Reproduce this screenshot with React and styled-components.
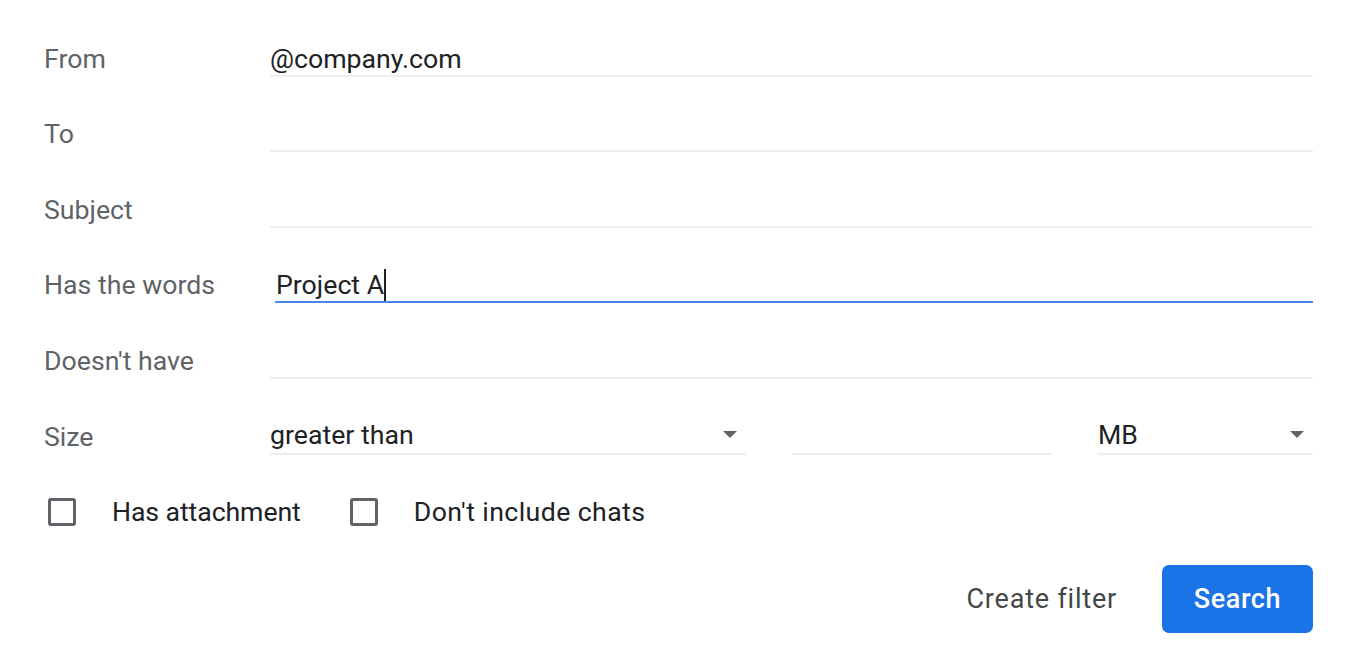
import React from "react";
import styled, { createGlobalStyle } from "styled-components";

const Global = createGlobalStyle`
  html, body { margin: 0; padding: 0; background: #ffffff; }
  body { font-family: Roboto, "Noto Sans", Arial, sans-serif; -webkit-font-smoothing: antialiased; }
`;

const Form = styled.div`
  width: 1348px;
  box-sizing: border-box;
  padding: 1px 35px 0 44px;
  display: flex;
  flex-direction: column;
`;

const Row = styled.div`
  display: grid;
  grid-template-columns: 226px 1fr;
  align-items: end;
  height: 75.6px;
`;

const Label = styled.div`
  font-size: 26.7px;
  line-height: 36px;
  color: #5f6368;
  white-space: nowrap;
`;

const Field = styled.div`
  position: relative;
  height: 36px;
  font-size: 26.7px;
  line-height: 40px;
  color: #202124;
  border-bottom: 2px solid ${(p) => (p.$focused ? "#4a86e8" : "#eceef1")};
  margin-left: ${(p) => (p.$focused ? "5px" : "0")};
  padding-left: ${(p) => (p.$focused ? "1px" : "0")};
  white-space: nowrap;
`;

const Caret = styled.span`
  display: inline-block;
  width: 2px;
  height: 32px;
  background: #202124;
  vertical-align: -7px;
`;

const SizeGroup = styled.div`
  display: grid;
  grid-template-columns: 476px 260px 1fr;
  column-gap: 46px;
  align-items: end;
`;

const Select = styled(Field)`
  display: flex;
  align-items: center;
  justify-content: space-between;
  padding-right: 9px;
`;

const Arrow = styled.span`
  width: 0;
  height: 0;
  border-left: 7.5px solid transparent;
  border-right: 7.5px solid transparent;
  border-top: 7.5px solid #5f6368;
`;

const CheckRow = styled.div`
  display: flex;
  align-items: center;
  margin-top: 43px;
  height: 28px;
  padding-left: 4px;
`;

const CheckItem = styled.label`
  display: flex;
  align-items: center;
  gap: 36px;
  margin-right: 49px;
  font-size: 26.7px;
  line-height: 32px;
  letter-spacing: ${(p) => p.$spacing || "0"};
  color: #202124;
  padding-top: 1px;
`;

const Box = styled.span`
  width: 28px;
  height: 28px;
  box-sizing: border-box;
  border: 3px solid #5f6368;
  border-radius: 3px;
  flex: none;
  margin-top: -1px;
`;

const Actions = styled.div`
  display: flex;
  justify-content: flex-end;
  align-items: center;
  gap: 21px;
  margin-top: 39px;
`;

const TextButton = styled.button`
  font-family: Roboto, "Noto Sans", Arial, sans-serif;
  font-size: 27px;
  font-weight: 400;
  letter-spacing: 0.8px;
  color: #444746;
  background: transparent;
  border: none;
  padding: 0 24px;
  height: 68px;
  cursor: pointer;
`;

const PrimaryButton = styled.button`
  font-family: Roboto, "Noto Sans", Arial, sans-serif;
  font-size: 27px;
  font-weight: 500;
  letter-spacing: 0.6px;
  color: #ffffff;
  background: #1b73e8;
  border: none;
  border-radius: 7px;
  width: 151px;
  height: 68px;
  cursor: pointer;
`;

const textRows = [
  { label: "From", value: "@company.com" },
  { label: "To", value: "" },
  { label: "Subject", value: "" },
  { label: "Has the words", value: "Project A", focused: true },
  { label: "Doesn't have", value: "" },
];

export default function App() {
  return (
    <>
      <Global />
      <Form>
        {textRows.map((r) => (
          <Row key={r.label}>
            <Label>{r.label}</Label>
            <Field $focused={r.focused}>
              {r.value}
              {r.focused && <Caret />}
            </Field>
          </Row>
        ))}
        <Row>
          <Label>Size</Label>
          <SizeGroup>
            <Select>
              <span>greater than</span>
              <Arrow />
            </Select>
            <Field />
            <Select>
              <span>MB</span>
              <Arrow />
            </Select>
          </SizeGroup>
        </Row>
        <CheckRow>
          <CheckItem $spacing="-0.1px">
            <Box />
            Has attachment
          </CheckItem>
          <CheckItem $spacing="0.4px">
            <Box />
            Don't include chats
          </CheckItem>
        </CheckRow>
        <Actions>
          <TextButton>Create filter</TextButton>
          <PrimaryButton>Search</PrimaryButton>
        </Actions>
      </Form>
    </>
  );
}
